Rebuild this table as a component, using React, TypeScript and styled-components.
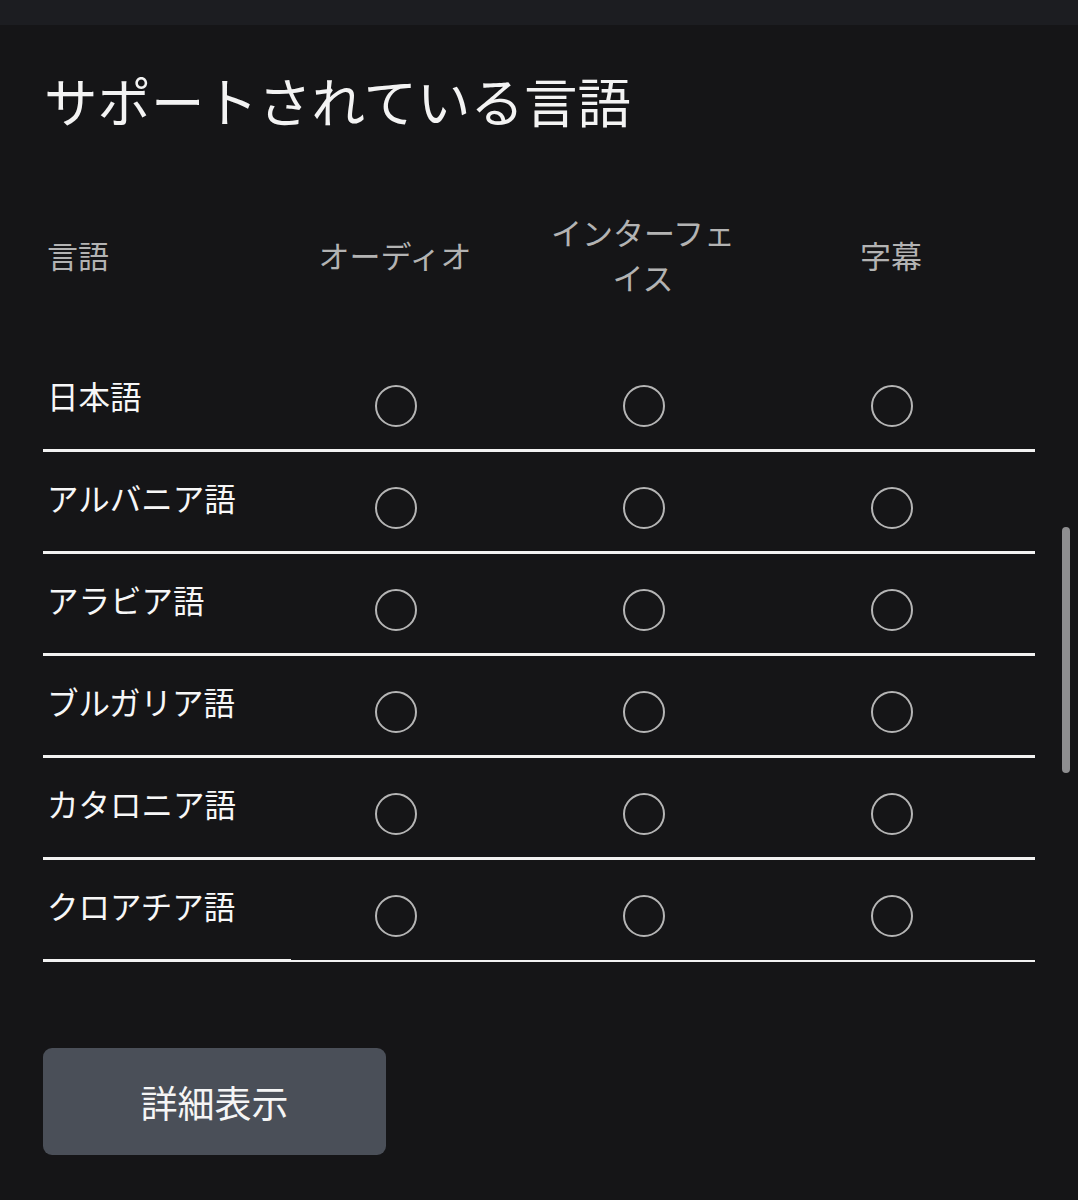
import React from "react";
import styled, { createGlobalStyle } from "styled-components";

const GlobalStyle = createGlobalStyle`
  html, body {
    margin: 0;
    padding: 0;
    background: #151517;
  }
  body {
    font-family: "Noto Sans CJK JP", "Noto Sans", sans-serif;
    overflow: hidden;
  }
`;

const Page = styled.div`
  position: relative;
  width: 1078px;
  min-height: 1200px;
  background: #151517;
`;

const TopBar = styled.div`
  height: 25px;
  background: #1c1d21;
`;

const Content = styled.main`
  padding: 0 43px;
`;

const Title = styled.h1`
  margin: 43px 0 0;
  padding-left: 1px;
  font-size: 53.5px;
  line-height: 64px;
  font-weight: 400;
  color: #f3f3f3;
  letter-spacing: 0;
`;

const Table = styled.div`
  margin-top: 34px;
  width: 992px;
`;

const Row = styled.div<{ $header?: boolean }>`
  display: grid;
  grid-template-columns: repeat(4, 248px);
  height: ${(p) => (p.$header ? "184px" : "102px")};
`;

const HeadCell = styled.div<{ $first?: boolean }>`
  display: flex;
  align-items: center;
  justify-content: ${(p) => (p.$first ? "flex-start" : "center")};
  padding: ${(p) => (p.$first ? "0 0 8px 4px" : "0 40px 8px 0")};
  text-align: center;
  font-size: 31px;
  line-height: 45px;
  color: #b3b3b3;
  box-sizing: border-box;
`;

const NameCell = styled.div`
  display: flex;
  align-items: center;
  padding: 0 0 10px 4px;
  box-sizing: border-box;
  font-size: 31.5px;
  line-height: 40px;
  color: #f7f7f7;
  border-bottom: 3px solid #f2f2f2;
`;

const RadioCell = styled.div<{ $last?: boolean }>`
  display: flex;
  align-items: center;
  justify-content: center;
  padding: 12px 38px 0 0;
  box-sizing: border-box;
  border-bottom: ${(p) => (p.$last ? "2px" : "3px")} solid #f2f2f2;
  margin-bottom: ${(p) => (p.$last ? "0.5px" : "0")};
`;

const Radio = styled.span`
  display: block;
  width: 42px;
  height: 42px;
  border-radius: 50%;
  border: 2.5px solid #b5b5b5;
  box-sizing: border-box;
`;

const MoreButton = styled.button`
  display: flex;
  align-items: center;
  justify-content: center;
  margin-top: 86px;
  width: 343px;
  height: 107px;
  border: none;
  border-radius: 9px;
  background: #4a4f58;
  color: #f5f5f5;
  font-family: "Noto Sans CJK JP", "Noto Sans", sans-serif;
  font-size: 37px;
  padding: 0;
`;

const ScrollThumb = styled.div`
  position: absolute;
  right: 8px;
  top: 527px;
  width: 8px;
  height: 246px;
  border-radius: 4px;
  background: #8e8e90;
`;

const languages = [
  "日本語",
  "アルバニア語",
  "アラビア語",
  "ブルガリア語",
  "カタロニア語",
  "クロアチア語",
];

export default function App() {
  return (
    <Page>
      <GlobalStyle />
      <TopBar />
      <Content>
        <Title>サポートされている言語</Title>
        <Table>
          <Row $header>
            <HeadCell $first>言語</HeadCell>
            <HeadCell>オーディオ</HeadCell>
            <HeadCell>インターフェイス</HeadCell>
            <HeadCell>字幕</HeadCell>
          </Row>
          {languages.map((lang, i) => {
            const last = i === languages.length - 1;
            return (
              <Row key={lang}>
                <NameCell>{lang}</NameCell>
                <RadioCell $last={last}>
                  <Radio />
                </RadioCell>
                <RadioCell $last={last}>
                  <Radio />
                </RadioCell>
                <RadioCell $last={last}>
                  <Radio />
                </RadioCell>
              </Row>
            );
          })}
        </Table>
        <MoreButton>詳細表示</MoreButton>
      </Content>
      <ScrollThumb />
    </Page>
  );
}
